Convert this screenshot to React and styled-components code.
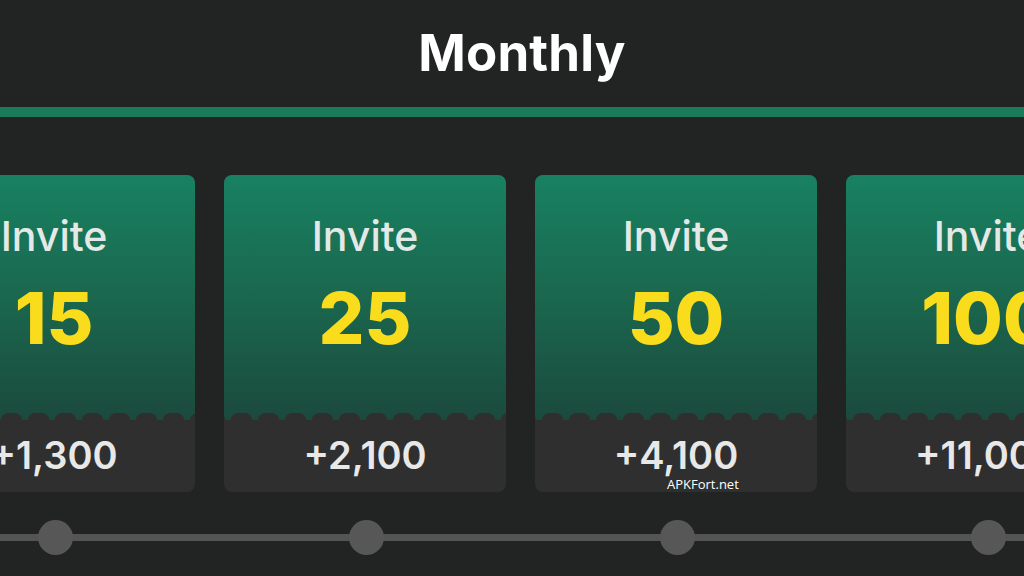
import React from "react";
import styled, { createGlobalStyle } from "styled-components";

const Global = createGlobalStyle`
  html, body { margin: 0; padding: 0; background: #222323; }
  body { width: 1024px; height: 576px; overflow: hidden; font-family: Inter, "Noto Sans", sans-serif; }
`;

const Page = styled.div`
  position: relative;
  width: 1024px;
  height: 576px;
  overflow: hidden;
  background: #222323;
  display: flex;
  flex-direction: column;
`;

const Header = styled.div`
  height: 107px;
  display: flex;
  align-items: flex-start;
  justify-content: center;
  padding-left: 20px;
  box-sizing: border-box;
`;

const Title = styled.h1`
  margin: 0;
  margin-top: 27px;
  font-family: Inter, sans-serif;
  font-weight: 700;
  font-size: 51px;
  line-height: 1;
  color: #ffffff;
  letter-spacing: 0.2px;
`;

const Rule = styled.div`
  height: 10px;
  background: #1a7b5a;
`;

const Row = styled.div`
  display: flex;
  gap: 29px;
  margin-left: -87px;
  margin-top: 58px;
`;

const Card = styled.div`
  flex: 0 0 282px;
  height: 317px;
  border-radius: 8px;
  overflow: hidden;
  display: flex;
  flex-direction: column;
  background: #2f2f2f;
`;

const Top = styled.div`
  position: relative;
  height: 245px;
  background: linear-gradient(180deg, #188161 0%, #1a6a50 45%, #1b4a3d 100%);
  display: flex;
  flex-direction: column;
  align-items: center;
  padding-top: 41px;
  box-sizing: border-box;

  &::after {
    content: "";
    position: absolute;
    left: 0;
    right: 0;
    bottom: 0;
    height: 7px;
    background: radial-gradient(ellipse 11px 8px at 50% 100%, #2f2f2f 0, #2f2f2f 95%, transparent 100%) 4px 0 / 27px 7px repeat-x;
  }
`;

const Label = styled.div`
  font-family: Inter, sans-serif;
  font-weight: 500;
  font-size: 41px;
  line-height: 1;
  color: #e3e9e6;
`;

const Count = styled.div`
  margin-top: 25px;
  font-family: Inter, sans-serif;
  font-weight: 800;
  font-size: 72px;
  line-height: 1;
  color: #f9dc1c;
`;

const Reward = styled.div`
  flex: 1;
  display: flex;
  align-items: center;
  justify-content: center;
  padding-bottom: 3px;
  font-family: Inter, sans-serif;
  font-weight: 600;
  font-size: 38px;
  line-height: 1;
  color: #e8e8e8;
`;

const Track = styled.div`
  display: flex;
  gap: 29px;
  margin-left: -87px;
  margin-top: 28px;
  height: 35px;
  background: linear-gradient(180deg, transparent 14px, #545454 14px, #545454 21px, transparent 21px);
`;

const Stop = styled.div`
  flex: 0 0 282px;
  display: flex;
  justify-content: center;
`;

const Dot = styled.div`
  width: 35px;
  height: 35px;
  margin-left: 2px;
  border-radius: 50%;
  background: #575757;
`;

const Watermark = styled.div`
  position: absolute;
  left: 667px;
  top: 475px;
  font-family: "Open Sans", sans-serif;
  font-size: 13px;
  line-height: 18px;
  color: #ffffff;
`;

const tiers = [
  { n: "15", r: "+1,300" },
  { n: "25", r: "+2,100" },
  { n: "50", r: "+4,100" },
  { n: "100", r: "+11,000" },
];

export default function App() {
  return (
    <Page>
      <Global />
      <Header>
        <Title>Monthly</Title>
      </Header>
      <Rule />
      <Row>
        {tiers.map((t) => (
          <Card key={t.n}>
            <Top>
              <Label>Invite</Label>
              <Count>{t.n}</Count>
            </Top>
            <Reward>{t.r}</Reward>
          </Card>
        ))}
      </Row>
      <Track>
        {tiers.map((t) => (
          <Stop key={t.n}>
            <Dot />
          </Stop>
        ))}
      </Track>
      <Watermark>APKFort.net</Watermark>
    </Page>
  );
}
